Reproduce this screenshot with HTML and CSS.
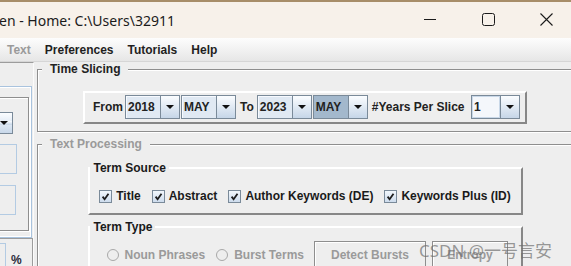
FILE: index.html
```html
<!DOCTYPE html>
<html lang="en">
<head>
    <meta charset="UTF-8">
    <meta name="viewport" content="width=device-width, initial-scale=1.0">
    <title>Home</title>
    <link rel="stylesheet" href="styles.css">
</head>
<body>
    <div class="titlebar">
        <span class="title">en - Home: C:\Users\32911</span>
        <div class="win-controls">
            <span class="win-btn">
                <svg width="12" height="12" viewBox="0 0 12 12"><line x1="0" y1="6.5" x2="12" y2="6.5" stroke="#1b1b1b" stroke-width="1"/></svg>
            </span>
            <span class="win-btn">
                <svg width="13" height="13" viewBox="0 0 13 13"><rect x="0.5" y="0.5" width="12" height="12" rx="2" fill="none" stroke="#1b1b1b" stroke-width="1"/></svg>
            </span>
            <span class="win-btn">
                <svg width="13" height="13" viewBox="0 0 13 13"><path d="M0.5 0.5 L12.5 12.5 M12.5 0.5 L0.5 12.5" stroke="#1b1b1b" stroke-width="1.1"/></svg>
            </span>
        </div>
    </div>

    <div class="menubar">
        <span class="menu menu_off">Text</span>
        <span class="menu">Preferences</span>
        <span class="menu">Tutorials</span>
        <span class="menu">Help</span>
    </div>

    <div class="workspace">
        <aside class="sidebar">
            <div class="side-panel">
                <div class="side-inner">
                    <div class="side-combo"><span class="arrow"></span></div>
                    <div class="side-field"></div>
                    <div class="side-field side-field_short"></div>
                </div>
            </div>
            <div class="side-foot">
                <span class="side-box"></span>
                <span class="pct">%</span>
            </div>
        </aside>

        <main class="main">
            <section class="group group_slicing">
                <span class="group-title">Time Slicing</span>
                <div class="slice-bar">
                    <span class="lbl lbl_from">From</span>
                    <div class="combo"><span class="field">2018</span><span class="arrow"></span></div>
                    <div class="combo combo_pair"><span class="field">MAY</span><span class="arrow"></span></div>
                    <span class="lbl lbl_to">To</span>
                    <div class="combo"><span class="field">2023</span><span class="arrow"></span></div>
                    <div class="combo combo_pair"><span class="field field_selected">MAY</span><span class="arrow"></span></div>
                    <span class="lbl lbl_years">#Years Per Slice</span>
                    <div class="combo combo_small"><span class="field field_white">1</span><span class="arrow"></span></div>
                </div>
            </section>

            <section class="group group_text">
                <span class="group-title group-title_off">Text Processing</span>

                <div class="box box_source">
                    <span class="box-title">Term Source</span>
                    <div class="check-row">
                        <label class="check"><span class="tick"><svg width="11" height="11" viewBox="0 0 11 11"><path d="M2.6 5.6 L4.6 8.2 L8.5 2.8" fill="none" stroke="#1e1e1e" stroke-width="1.8"/></svg></span>Title</label>
                        <label class="check"><span class="tick"><svg width="11" height="11" viewBox="0 0 11 11"><path d="M2.6 5.6 L4.6 8.2 L8.5 2.8" fill="none" stroke="#1e1e1e" stroke-width="1.8"/></svg></span>Abstract</label>
                        <label class="check"><span class="tick"><svg width="11" height="11" viewBox="0 0 11 11"><path d="M2.6 5.6 L4.6 8.2 L8.5 2.8" fill="none" stroke="#1e1e1e" stroke-width="1.8"/></svg></span>Author Keywords (DE)</label>
                        <label class="check"><span class="tick"><svg width="11" height="11" viewBox="0 0 11 11"><path d="M2.6 5.6 L4.6 8.2 L8.5 2.8" fill="none" stroke="#1e1e1e" stroke-width="1.8"/></svg></span>Keywords Plus (ID)</label>
                    </div>
                </div>

                <div class="box box_type">
                    <span class="box-title">Term Type</span>
                    <div class="type-row">
                        <label class="radio"><span class="dot"></span>Noun Phrases</label>
                        <label class="radio radio_second"><span class="dot"></span>Burst Terms</label>
                        <button class="btn btn_bursts" disabled>Detect Bursts</button>
                        <button class="btn btn_entropy" disabled>Entropy</button>
                    </div>
                </div>
            </section>
        </main>
    </div>

    <div class="watermark">CSDN @一号言安</div>
</body>
</html>
```

FILE: styles.css
```css
body {
    margin: 0;
    width: 571px;
    height: 266px;
    overflow: hidden;
    position: relative;
    background-color: #eeeeee;
    font-family: "Liberation Sans", Arial, sans-serif;
    font-size: 12px;
    font-weight: bold;
    color: #222;
}

/* window title bar */
.titlebar {
    height: 36px;
    border-top: 2px solid #a78d69;
    background-color: #f7f1ea;
    display: flex;
    align-items: center;
    font-weight: normal;
}
.title {
    font-family: "Noto Sans", sans-serif;
    font-size: 14px;
    color: #1b1b1b;
    margin-left: -1px;
}
.win-controls {
    margin-left: auto;
    margin-right: -4px;
    display: flex;
    margin-top: -2px;
}
.win-btn {
    width: 58px;
    height: 30px;
    display: flex;
    align-items: center;
    justify-content: center;
}

/* menu bar */
.menubar {
    height: 23px;
    border-bottom: 1px solid #d6d6d6;
    background: linear-gradient(#fdfdfd, #e6e6e6);
    display: flex;
    align-items: center;
}
.menu {
    padding: 0 7px;
    color: #1f1f1f;
}
.menu_off {
    color: #9a9a9a;
}

.workspace {
    display: flex;
    height: 204px;
}

/* left panel, cut off by the window */
.sidebar {
    width: 33px;
    flex-shrink: 0;
    border-top: 1px solid #9c9c9c;
    border-right: 1px solid #fbfbfb;
    overflow: hidden;
    display: flex;
    flex-direction: column;
}
.side-panel {
    margin-top: 23px;
    margin-left: -20px;
    width: 50px;
    height: 150px;
    border: 1px solid #a9c3de;
    box-shadow: inset 0 0 0 1px #fff;
    flex-shrink: 0;
}
.side-inner {
    margin-top: 10px;
    margin-left: 1px;
    width: 45px;
    height: 132px;
    border: 1px solid #8e8e8e;
    box-shadow: 1px 1px 0 #fff, inset 1px 1px 0 #fff;
}
.side-combo {
    margin-top: 14px;
    width: 30px;
    height: 22px;
    box-sizing: border-box;
    border: 1px solid #7a8a99;
    background: linear-gradient(#fbfdff, #c8d8ea);
    display: flex;
    justify-content: flex-end;
    align-items: center;
}
.side-combo .arrow {
    width: 16px;
}
.side-field {
    margin-top: 10px;
    width: 34px;
    height: 30px;
    box-sizing: border-box;
    border: 1px solid #b3cbe3;
}
.side-field_short {
    margin-top: 11px;
    width: 33px;
}
.side-foot {
    flex: 1;
    border-top: 1px solid #9c9c9c;
    border-right: 1px solid #9c9c9c;
    display: flex;
    align-items: flex-start;
}
.side-box {
    margin-top: 4px;
    margin-left: -10px;
    width: 14px;
    height: 30px;
    border: 1px solid #b3cbe3;
}
.pct {
    margin-left: 5px;
    margin-top: 14px;
    color: #2b2b3a;
}

/* right side */
.main {
    flex: 1;
    padding: 7px 0 0 3px;
}
.group {
    position: relative;
    width: 534px;
    border: 1px solid #8e8e8e;
    box-shadow: 1px 1px 0 #fff, inset 1px 1px 0 #fff;
}
.group-title {
    position: absolute;
    top: -8px;
    left: 4px;
    padding: 0 8px;
    line-height: 14px;
    background-color: #eeeeee;
    color: #222;
}
.group-title_off {
    color: #9a9a9a;
}
.group_slicing {
    padding: 21px 0 7px;
    display: flex;
    justify-content: center;
}
.group_text {
    margin-top: 12px;
    height: 140px;
    padding-top: 22px;
    display: flex;
    flex-direction: column;
    align-items: center;
    gap: 11px;
}

.slice-bar {
    width: 427px;
    display: flex;
    align-items: center;
    padding: 2px 5px 3px 8px;
    border-top: 2px solid #fff;
    border-left: 2px solid #fff;
    border-bottom: 2px solid #878787;
    border-right: 2px solid #878787;
}
.lbl_from {
    margin-right: 2px;
}
.lbl_to {
    margin-left: 4px;
    margin-right: 3px;
}
.lbl_years {
    margin-left: 4px;
}

.combo {
    width: 55px;
    height: 24px;
    box-sizing: border-box;
    border: 1px solid #7a8a99;
    display: flex;
}
.combo_pair {
    margin-left: 1px;
}
.combo_small {
    width: 49px;
    margin-left: auto;
}
.combo .field {
    flex: 1;
    padding-left: 2px;
    display: flex;
    align-items: center;
    background-color: #e0e9f3;
    box-shadow: inset 1px 1px 0 #f7faff;
}
.combo .field_selected {
    background-color: #a3b8cc;
    box-shadow: none;
}
.combo .field_white {
    background-color: #f4f7fb;
    box-shadow: inset 0 0 0 1px #c9d8e8;
}
.arrow {
    width: 18px;
    display: flex;
    align-items: center;
    justify-content: center;
    background: linear-gradient(#fbfdff, #c6d6e8);
}
.combo .arrow {
    border-left: 1px solid #7a8a99;
}
.arrow::after {
    content: "";
    border-left: 4px solid transparent;
    border-right: 4px solid transparent;
    border-top: 4px solid #111;
}

/* inner titled boxes */
.box {
    position: relative;
    width: 431px;
    border-top: 2px solid #fff;
    border-left: 2px solid #fff;
    border-bottom: 2px solid #878787;
    border-right: 2px solid #878787;
}
.box-title {
    position: absolute;
    top: -8px;
    left: 0;
    padding: 0 3px 0 4px;
    line-height: 14px;
    background-color: #eeeeee;
    color: #1a1a1a;
}
.box_source {
    height: 44px;
}
.box_type {
    flex: 1;
    border-bottom: none;
}

.check-row {
    display: flex;
    justify-content: center;
    gap: 11px;
    margin-top: 20px;
}
.check {
    display: flex;
    align-items: center;
    gap: 4px;
    color: #1a1a1a;
}
.tick {
    width: 11px;
    height: 11px;
    border: 1px solid #7a8a99;
    background: linear-gradient(#f2f7fc, #cddced);
    display: flex;
}

.type-row {
    display: flex;
    align-items: center;
    margin-top: 13px;
    padding-left: 17px;
}
.radio {
    display: flex;
    align-items: center;
    gap: 6px;
    color: #9a9a9a;
}
.radio_second {
    margin-left: 11px;
}
.dot {
    width: 10px;
    height: 10px;
    border: 1px solid #a8a8a8;
    border-radius: 50%;
}
.btn {
    height: 27px;
    border: 1px solid #8e8e8e;
    box-shadow: inset 1px 1px 0 #fff;
    background-color: #eeeeee;
    font-family: inherit;
    font-size: 12px;
    font-weight: bold;
    color: #9a9a9a;
    padding: 0;
}
.btn_bursts {
    margin-left: 10px;
    width: 112px;
}
.btn_entropy {
    margin-left: 6px;
    width: 76px;
}

.watermark {
    position: absolute;
    left: 419px;
    top: 241px;
    font-family: "Noto Sans", "Noto Sans CJK SC", sans-serif;
    font-size: 17px;
    font-weight: normal;
    line-height: 20px;
    color: rgba(110, 110, 110, 0.7);
}
```
